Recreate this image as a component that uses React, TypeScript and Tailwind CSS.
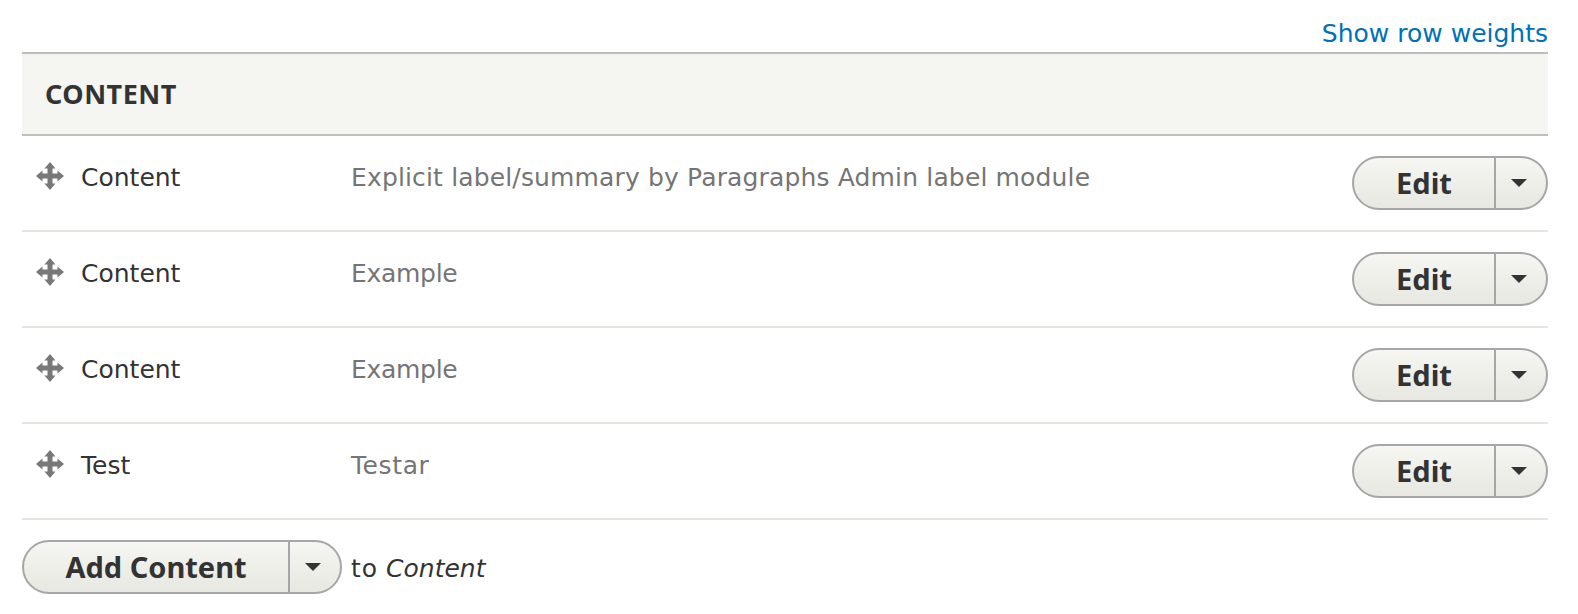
const rows = [
  { name: 'Content', summary: 'Explicit label/summary by Paragraphs Admin label module', spacing: 'tracking-[0.15px]' },
  { name: 'Content', summary: 'Example', spacing: 'tracking-[-0.3px]' },
  { name: 'Content', summary: 'Example', spacing: 'tracking-[-0.3px]' },
  { name: 'Test', summary: 'Testar', spacing: 'tracking-[0.6px]' },
]

function DragIcon() {
  return (
    <svg width="28" height="28" viewBox="0 0 28 28" className="text-[#787878]" fill="currentColor">
      <path d="M14 0 L19.5 6.5 L16.5 6.5 L16.5 11.5 L21.5 11.5 L21.5 8.5 L28 14 L21.5 19.5 L21.5 16.5 L16.5 16.5 L16.5 21.5 L19.5 21.5 L14 28 L8.5 21.5 L11.5 21.5 L11.5 16.5 L6.5 16.5 L6.5 19.5 L0 14 L6.5 8.5 L6.5 11.5 L11.5 11.5 L11.5 6.5 L8.5 6.5 Z" />
    </svg>
  )
}

function SplitButton({ label, mainWidth }: { label: string; mainWidth: string }) {
  return (
    <div className="flex h-[54px] rounded-full border-2 border-[#a6a6a6] bg-gradient-to-b from-[#f6f6f2] to-[#e8e8e2] overflow-hidden">
      <div className={`flex items-center justify-center ${mainWidth} font-['Noto_Sans',sans-serif] text-[29px] font-bold text-[#333333]`}>
        {label}
      </div>
      <div className="flex w-[52px] items-center justify-center border-l-2 border-[#a6a6a6]">
        <div className="w-0 h-0 border-x-[8px] border-x-transparent border-t-[8px] border-t-[#333333] mr-1" />
      </div>
    </div>
  )
}

export default function App() {
  return (
    <div className="w-[1578px] h-[614px] bg-white pl-[22px] pr-[30px] overflow-hidden font-['DejaVu_Sans','Liberation_Sans',sans-serif] text-[#333333]">
      <div className="flex justify-end h-[52px] items-center pt-[16px]">
        <a className="text-[25px] text-[#0071b8]">Show row weights</a>
      </div>
      <div className="flex items-center h-[84px] border-y-2 border-[#bfbfba] bg-[#f5f5f2] pl-[23px] font-['Noto_Sans',sans-serif] text-[27px] tracking-[0.5px] font-bold">
        CONTENT
      </div>
      {rows.map((row, i) => (
        <div key={i} className="flex h-[96px] border-b-2 border-[#e6e6e1] pt-[20px]">
          <div className="flex w-[59px] justify-end pr-[17px] pt-[6px]">
            <DragIcon />
          </div>
          <div className="w-[270px] text-[25px] leading-[43px]">{row.name}</div>
          <div className={`flex-1 text-[25px] leading-[43px] text-[#757575] ${row.spacing}`}>{row.summary}</div>
          <SplitButton label="Edit" mainWidth="w-[140px]" />
        </div>
      ))}
      <div className="flex items-center mt-[20px] gap-[9px]">
        <SplitButton label="Add Content" mainWidth="w-[264px]" />
        <span className="pt-[3px] text-[25px]">
          <span className="tracking-[1px]">to</span> <em>Content</em>
        </span>
      </div>
    </div>
  )
}
